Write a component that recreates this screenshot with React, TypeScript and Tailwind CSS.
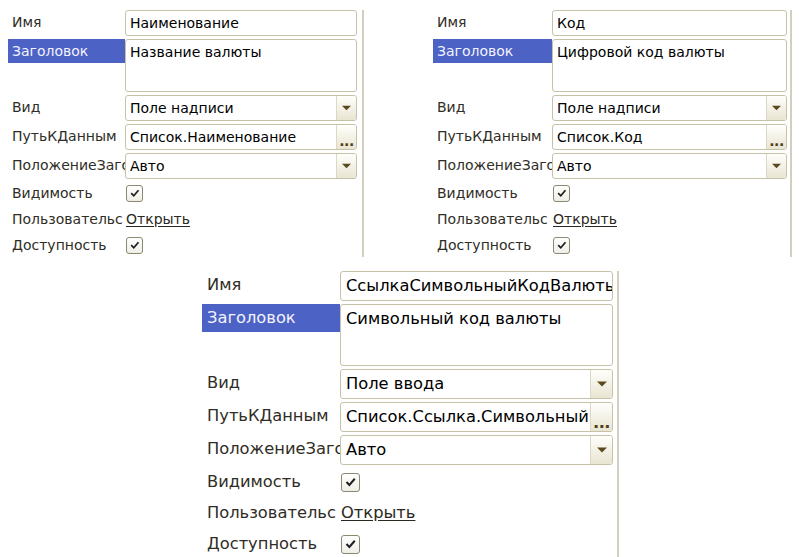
import React from 'react';

type Size = 'sm' | 'lg';

// размеры для маленьких (верхних) и крупной (нижней) панели
const S = {
  sm: {
    text: 'text-[14px]',
    row: 'h-[26px]',
    area: 'h-[53px]',
    hl: 'h-[24px]',
    chkRow: 'h-[24px]',
    chkGap: 'gap-[2px]',
    chk: 'w-[17px] h-[17px]',
    btn: 'w-[20px]',
    lpl: 'pl-[4px]',
    fpl: 'pl-[4px]',
    lead: 'leading-[24px]',
    arrow: 9,
  },
  lg: {
    text: 'text-[16.3px]',
    row: 'h-[30px]',
    area: 'h-[62px]',
    hl: 'h-[28px]',
    chkRow: 'h-[30px]',
    chkGap: 'gap-[1px]',
    chk: 'w-[19px] h-[19px]',
    btn: 'w-[22px]',
    lpl: 'pl-[5px]',
    fpl: 'pl-[5px]',
    lead: 'leading-[28px]',
    arrow: 10,
  },
};

type PanelData = {
  name: string;
  title: string;
  kind: string;
  path: string;
};

function Label({ text, s, active, className = '' }: { text: string; s: Size; active?: boolean; className?: string }) {
  const v = S[s];
  return (
    <div
      className={`shrink-0 overflow-hidden whitespace-nowrap ${v.lpl} ${className} ${
        active ? 'bg-[#4c62c4] text-[#f2f3ff]' : 'text-[#2f2d26]'
      }`}
    >
      {text}
    </div>
  );
}

function Arrow({ w }: { w: number }) {
  return (
    <svg width={w} height={Math.round(w / 2) + 1} viewBox="0 0 10 6">
      <path d="M0 0.5 H10 L5 5.5 Z" fill="#5a4a1c" />
    </svg>
  );
}

function Field({ text, s, btn }: { text: string; s: Size; btn?: 'drop' | 'dots' }) {
  const v = S[s];
  return (
    <div className={`flex flex-1 min-w-0 ${v.row} bg-white border border-[#c6c2a8] rounded-[3px] overflow-hidden`}>
      <div className={`flex-1 min-w-0 overflow-hidden whitespace-nowrap text-black ${v.fpl} ${v.lead}`}>{text}</div>
      {btn && (
        <div
          className={`${v.btn} shrink-0 flex justify-center border-l border-[#dcd8c4] bg-linear-to-b from-[#fffffc] to-[#e9e5d2] ${
            btn === 'drop' ? 'items-center' : 'items-end pb-[3px]'
          }`}
        >
          {btn === 'drop' ? (
            <Arrow w={v.arrow} />
          ) : (
            <span className="font-bold text-[#4d4020] leading-[10px] tracking-[-0.5px]">...</span>
          )}
        </div>
      )}
    </div>
  );
}

function Check({ s }: { s: Size }) {
  const v = S[s];
  return (
    <div className={`${v.chk} ml-[1px] rounded-[3px] border border-[#8d8872] bg-linear-to-b from-white to-[#efeee6] flex items-center justify-center`}>
      <svg viewBox="0 0 16 16" className="w-[78%] h-[78%]">
        <path d="M3 8.5 L6.5 12 L13 4.5" fill="none" stroke="#1f1f1f" strokeWidth="2.4" />
      </svg>
    </div>
  );
}

function Panel({
  d,
  s,
  labelW,
  fieldW,
  gap,
  className = '',
}: {
  d: PanelData;
  s: Size;
  labelW: string;
  fieldW: string;
  gap: string;
  className?: string;
}) {
  const v = S[s];
  const lrow = `${labelW} ${v.lead}`;
  return (
    <div className={`flex ${gap} ${className}`}>
      <div className={`flex flex-col ${v.text}`} style={{ fontFamily: '"DejaVu Sans", sans-serif' }}>
        <div className="flex flex-col gap-[3px]">
          <div className="flex">
            <Label text="Имя" s={s} className={`${lrow} ${v.row}`} />
            <div className={`flex ${fieldW}`}>
              <Field text={d.name} s={s} />
            </div>
          </div>
          <div className="flex">
            <Label text="Заголовок" s={s} active className={`${labelW} ${v.hl} ${v.lead}`} />
            <div
              className={`${fieldW} ${v.area} bg-white border border-[#c6c2a8] rounded-[3px] text-black ${v.fpl} ${v.lead}`}
            >
              {d.title}
            </div>
          </div>
          <div className="flex">
            <Label text="Вид" s={s} className={`${lrow} ${v.row}`} />
            <div className={`flex ${fieldW}`}>
              <Field text={d.kind} s={s} btn="drop" />
            </div>
          </div>
          <div className="flex">
            <Label text="ПутьКДанным" s={s} className={`${lrow} ${v.row}`} />
            <div className={`flex ${fieldW}`}>
              <Field text={d.path} s={s} btn="dots" />
            </div>
          </div>
          <div className="flex">
            <Label text="ПоложениеЗаголовка" s={s} className={`${lrow} ${v.row}`} />
            <div className={`flex ${fieldW}`}>
              <Field text="Авто" s={s} btn="drop" />
            </div>
          </div>
        </div>
        <div className={`flex flex-col mt-[2px] ${v.chkGap}`}>
          <div className={`flex items-center ${v.chkRow}`}>
            <Label text="Видимость" s={s} className={labelW} />
            <Check s={s} />
          </div>
          <div className={`flex items-center ${v.chkRow}`}>
            <Label text="Пользовательс" s={s} className={labelW} />
            <span className="ml-[1px] underline underline-offset-2 text-[#2a2820]">Открыть</span>
          </div>
          <div className={`flex items-center ${v.chkRow}`}>
            <Label text="Доступность" s={s} className={labelW} />
            <Check s={s} />
          </div>
        </div>
      </div>
      <div className="w-[2px] self-stretch bg-[#d3cfbf]" />
    </div>
  );
}

export default function App() {
  return (
    <div className="w-[799px] h-[557px] bg-white overflow-hidden">
      <div className="flex pt-[8px]">
        <Panel
          s="sm"
          className="ml-[8px] pt-[2px]"
          labelW="w-[117px]"
          fieldW="w-[232px]"
          gap="gap-[5px]"
          d={{ name: 'Наименование', title: 'Название валюты', kind: 'Поле надписи', path: 'Список.Наименование' }}
        />
        <Panel
          s="sm"
          className="ml-[69px] pt-[2px]"
          labelW="w-[119px]"
          fieldW="w-[235px]"
          gap="gap-[3px]"
          d={{ name: 'Код', title: 'Цифровой код валюты', kind: 'Поле надписи', path: 'Список.Код' }}
        />
      </div>
      <Panel
        s="lg"
        className="ml-[202px] mt-[14px]"
        labelW="w-[138px]"
        fieldW="w-[273px]"
        gap="gap-[4px]"
        d={{
          name: 'СсылкаСимвольныйКодВалюты',
          title: 'Символьный код валюты',
          kind: 'Поле ввода',
          path: 'Список.Ссылка.СимвольныйКодВалюты',
        }}
      />
    </div>
  );
}
